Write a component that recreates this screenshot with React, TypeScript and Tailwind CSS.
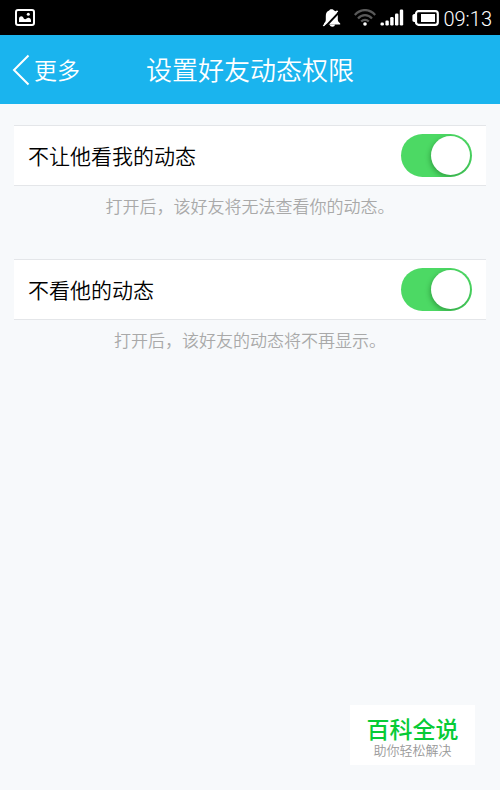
import { useState } from "react";

type PermissionRowProps = {
  id: string;
  label: string;
  hint: string;
};

const PermissionRow = ({ id, label, hint }: PermissionRowProps) => {
  const [enabled, setEnabled] = useState(true);

  return (
    <section>
      <div className="flex items-center justify-between border-y border-[#e4e6e9] bg-white px-3.5 py-2">
        <label htmlFor={id} className="pb-0.5 text-[21px] leading-7 text-black">
          {label}
        </label>
        <input
          id={id}
          type="checkbox"
          role="switch"
          checked={enabled}
          aria-describedby={`${id}-hint`}
          onChange={(event) => setEnabled(event.target.checked)}
          className="flex h-[43px] w-[71px] shrink-0 cursor-pointer appearance-none items-center overflow-hidden rounded-full bg-[#d8dadd] px-0.5 before:size-[39px] before:rounded-full before:bg-white before:shadow-[-1px_2px_5px_rgba(0,60,10,0.35)] before:content-[''] checked:justify-end checked:bg-[#4cd964]"
        />
      </div>
      <p id={`${id}-hint`} className="mt-2 text-center text-[17px] leading-6 text-[#a9a9a9]">
        {hint}
      </p>
    </section>
  );
};

const PictureIcon = () => (
  <svg width="20" height="17" viewBox="0 0 20 17" fill="none" aria-hidden="true">
    <rect x="1" y="1" width="18" height="15" rx="2" stroke="#fff" strokeWidth="2" />
    <path d="M4 13V10C4 8.4 5 7.3 6.3 7.3C7.6 7.3 8 8 8.6 9.2C9.4 10.6 10.8 10.4 11.6 9.6C12.5 8.8 13.4 8.4 14.2 8.9C15.2 9.2 16 10 16 11.5V13Z" fill="#fff" />
    <circle cx="13.3" cy="5.3" r="1.5" fill="#fff" />
  </svg>
);

const MutedBellIcon = () => (
  <svg width="20" height="18" viewBox="0 0 20 18" aria-hidden="true">
    <path
      d="M9.5 0.3C10.6 0.3 11.5 0.8 12 1.6C14.6 2.4 15.8 4.4 15.8 7V10.5C15.8 12.3 16.8 13.2 18.2 14.4V15.6H2V14.4C3.2 13.2 3.8 12.3 3.8 10.5V7C3.8 4.4 4.8 2.4 7.2 1.6C7.6 0.8 8.4 0.3 9.5 0.3Z"
      fill="#fff"
    />
    <path d="M7.6 15.5H13C12.7 17 11.8 17.7 10.4 17.7C9 17.7 8 17 7.6 15.5Z" fill="#fff" />
    <path d="M1.4 17L15.6 1.8" stroke="#fff" strokeWidth="1.8" />
    <path d="M2 19.2L18.6 1.6" stroke="#000" strokeWidth="2" />
  </svg>
);

const WifiIcon = () => (
  <svg width="22" height="17" viewBox="0 0 22 17" fill="none" aria-hidden="true">
    <g stroke="#595959" strokeWidth="2.2">
      <path d="M0.8 6C6.5 -0.6 15.5 -0.6 21.2 6" />
      <path d="M4 9.4C8 5 14 5 18 9.4" />
      <path d="M7.2 12.6C9.4 10.2 12.6 10.2 14.8 12.6" />
    </g>
    <circle cx="11" cy="15" r="1.8" fill="#fff" />
  </svg>
);

const SignalIcon = () => (
  <svg width="24" height="17" viewBox="0 0 24 17" fill="#fff" aria-hidden="true">
    <rect x="0.5" y="13.5" width="3.4" height="3" rx="1.2" />
    <rect x="5.4" y="11.5" width="3.4" height="5" rx="1.2" />
    <rect x="10.2" y="8" width="3.4" height="8.5" rx="1.2" />
    <rect x="15" y="4.5" width="3.4" height="12" rx="1.2" />
    <rect x="19.8" y="0.5" width="3.4" height="16" rx="1.2" />
  </svg>
);

const BatteryIcon = () => (
  <svg width="27" height="16" viewBox="0 0 27 16" fill="none" aria-hidden="true">
    <rect x="4" y="1.2" width="21.8" height="13.6" rx="2.5" stroke="#fff" strokeWidth="2.2" />
    <path d="M3.4 4H2.4C1 4 0.4 5 0.4 6V10C0.4 11 1 12 2.4 12H3.4Z" fill="#fff" />
    <rect x="9" y="4" width="14" height="8" fill="#fff" />
  </svg>
);

const App = () => {
  return (
    <div className="min-h-screen bg-[#f7f9fb] font-['Noto_Sans_CJK_SC',sans-serif] font-[350]">
      <div className="flex h-[35px] items-center justify-between bg-black pl-[15px] pr-2">
        <PictureIcon />
        <div className="flex items-center">
          <MutedBellIcon />
          <span className="ml-3">
            <WifiIcon />
          </span>
          <span className="ml-1">
            <SignalIcon />
          </span>
          <span className="ml-2">
            <BatteryIcon />
          </span>
          <time className="ml-1 pt-0.5 font-[Roboto,sans-serif] text-xl font-light leading-6 text-white">09:13</time>
        </div>
      </div>

      <header className="grid h-[69px] grid-cols-[1fr_auto_1fr] items-center bg-[#1ab4ee] px-3 text-white">
        <button type="button" className="flex cursor-pointer items-center gap-1 justify-self-start text-[23px] leading-8">
          <svg width="18" height="32" viewBox="0 0 18 32" fill="none" aria-hidden="true">
            <path d="M16.5 1.5L2 16L16.5 30.5" stroke="#fff" strokeWidth="2" />
          </svg>
          <span className="pb-0.5">更多</span>
        </button>
        <h1 className="pb-0.5 text-[26px] leading-9">设置好友动态权限</h1>
      </header>

      <main className="flex flex-col gap-[41px] px-3.5 pt-[21px]">
        <PermissionRow
          id="hide-my-feed"
          label="不让他看我的动态"
          hint="打开后，该好友将无法查看你的动态。"
        />
        <PermissionRow id="skip-their-feed" label="不看他的动态" hint="打开后，该好友的动态将不再显示。" />
      </main>

      <aside className="fixed bottom-[25px] right-[25px] flex h-[60px] w-[125px] flex-col items-center justify-center bg-white pt-1.5">
        <strong className="text-[23px] font-medium leading-6 text-[#07cb36]">百科全说</strong>
        <span className="text-[13px] leading-5 text-[#999999]">助你轻松解决</span>
      </aside>
    </div>
  );
};

export default App;
